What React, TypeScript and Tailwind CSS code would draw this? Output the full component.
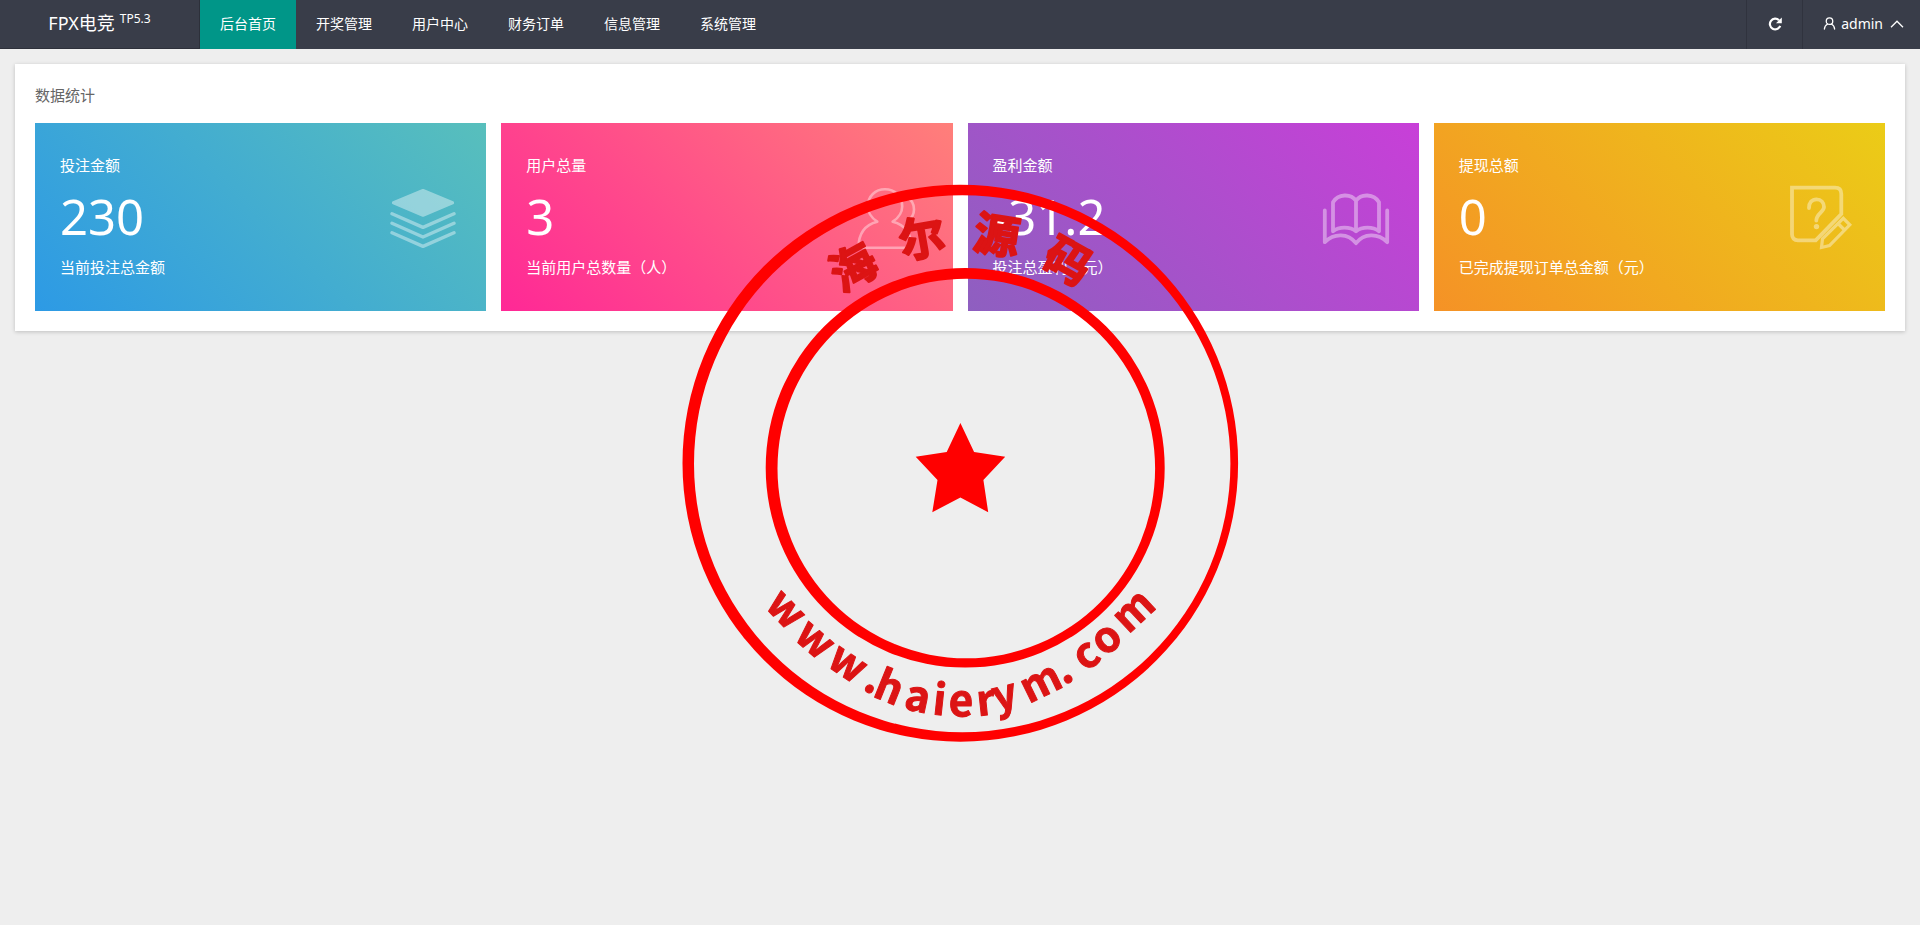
import type { ReactNode } from "react";

const navItems = ["后台首页", "开奖管理", "用户中心", "财务订单", "信息管理", "系统管理"];

function LayersIcon() {
  return (
    <g stroke="#fff" strokeLinecap="round" strokeLinejoin="round">
      <path d="M33 6.5 62.5 18.8 33 31.2 3.5 18.8Z" fill="#fff" strokeWidth="3.2" />
      <g fill="none" strokeWidth="3.4">
        <path d="M2 29.7 33 43.4 64 29.7" />
        <path d="M2 39.3 33 53 64 39.3" />
        <path d="M2 48.8 33 62.4 64 48.8" />
      </g>
    </g>
  );
}

function UsersIcon() {
  return (
    <g fill="none" stroke="#fff" strokeWidth="2.6" strokeLinejoin="round">
      <path d="M1.5 63.7C1.5 48 9 40.5 20.3 37.7C13.5 33.5 10.8 27 10.8 22.5C10.8 12 18.5 5.3 28 5.3S45.2 12 45.2 22.5C45.2 27 42.5 33.5 35.7 37.7C47 40.5 54.5 48 54.5 63.7Z" />
      <path d="M49.5 13C54.5 15.5 57 20 57 25.5C57 30.5 54.5 34.5 50.5 37.7" />
    </g>
  );
}

function BookIcon() {
  return (
    <g fill="none" stroke="#fff" strokeWidth="3.8" strokeLinecap="round" strokeLinejoin="round">
      <path d="M33 16.7C28 9.5 15 9.5 10 18.3V47.3C16 42.5 27 42.5 33 47.3C39 42.5 50 42.5 56 47.3V18.3C51 9.5 38 9.5 33 16.7V47.3" />
      <path d="M1.8 26.5V58.2C11 49 25 49 33 59.2C41 49 55 49 64.2 58.2V26.5" />
    </g>
  );
}

function QuestionIcon() {
  return (
    <g fill="none" stroke="#fff" strokeWidth="3.8">
      <path d="M3 3.7H46C50 3.7 52.3 6 52.3 10V30L26.7 56.3H9C5 56.3 3 54 3 50.3Z" />
      <path d="M20 24C20 18.5 23 15.3 27.5 15.3S35 18.5 35 23C35 28 27.3 29.500 27.3 36.5" strokeLinecap="round" />
      <circle cx="27.5" cy="42.6" r="2.7" fill="#fff" stroke="none" />
      <path d="M32.500 63.500 33.500 54.800 54.300 34.300 60.800 40.800 40.500 61.500ZM49 39.500 55.500 46" strokeWidth="3.2" />
    </g>
  );
}

type Stat = { title: string; value: string; note: string; tone: string; icon: ReactNode };

const stats: Stat[] = [
  {
    title: "投注金额",
    value: "230",
    note: "当前投注总金额",
    tone: "bg-[linear-gradient(45deg,#2d9ae5,#58bfbc)]",
    icon: <LayersIcon />,
  },
  {
    title: "用户总量",
    value: "3",
    note: "当前用户总数量（人）",
    tone: "bg-[linear-gradient(45deg,#ff2896,#ff7f7a)]",
    icon: <UsersIcon />,
  },
  {
    title: "盈利金额",
    value: "-31.2",
    note: "投注总盈利（元）",
    tone: "bg-[linear-gradient(45deg,#8e5fc0,#c83fd8)]",
    icon: <BookIcon />,
  },
  {
    title: "提现总额",
    value: "0",
    note: "已完成提现订单总金额（元）",
    tone: "bg-[linear-gradient(45deg,#f59226,#ebcc17)]",
    icon: <QuestionIcon />,
  },
];

function StatCard({ stat }: { stat: Stat }) {
  return (
    <article className={`flex items-center justify-between py-6 pr-[30px] pl-[25px] text-white ${stat.tone}`}>
      <div className="pb-[2px] text-[15px] whitespace-nowrap">
        <h3 className="leading-9">{stat.title}</h3>
        <p className="text-[49px] leading-[66px]">{stat.value}</p>
        <p className="leading-9">{stat.note}</p>
      </div>
      <svg viewBox="0 0 66 66" className="size-[66px] shrink-0 overflow-visible" aria-hidden="true">
        <g opacity="0.4">{stat.icon}</g>
      </svg>
    </article>
  );
}

// Each glyph sits on the seal's arc: position and rotation in degrees.
const sealName = [
  { c: "海", x: 853, y: 267, r: -29 },
  { c: "尔", x: 922, y: 238, r: -10 },
  { c: "源", x: 997, y: 235, r: 9 },
  { c: "码", x: 1068, y: 261, r: 29 },
];

const sealSite = [
  { c: "w", x: 776, y: 619, r: 46 },
  { c: "w", x: 806, y: 650, r: 41 },
  { c: "w", x: 840, y: 675, r: 34 },
  { c: ".", x: 868, y: 692, r: 26 },
  { c: "h", x: 884, y: 701, r: 22 },
  { c: "a", x: 915, y: 711, r: 12 },
  { c: "i", x: 938, y: 715, r: 6 },
  { c: "e", x: 961, y: 716, r: 0 },
  { c: "r", x: 987, y: 715, r: -6 },
  { c: "y", x: 1008, y: 709, r: -14 },
  { c: "m", x: 1047, y: 695, r: -26 },
  { c: ".", x: 1070, y: 682, r: -30 },
  { c: "c", x: 1094, y: 666, r: -35 },
  { c: "o", x: 1115, y: 649, r: -40 },
  { c: "m", x: 1143, y: 621, r: -43 },
];

function Seal() {
  return (
    <div className="pointer-events-none fixed inset-0 flex items-center justify-center">
      <svg viewBox="682 184 556 557" className="h-[557px] w-[556px] shrink-0 overflow-visible" role="img" aria-label="海尔源码 www.haierym.com">
        <g fill="#f00" fillRule="evenodd">
          <path d="M682.5 463.2A277.8 278.3 0 1 1 1238.1 463.2A277.8 278.3 0 1 1 682.5 463.2ZM694 463.7A268.2 268.5 0 1 0 1230.4 463.7A268.2 268.5 0 1 0 694 463.7Z" />
          <path d="M765.7 467.8A199.5 199.8 0 1 1 1164.7 467.8A199.5 199.8 0 1 1 765.7 467.8ZM777.5 468.5A188.8 189.8 0 1 0 1155.1 468.5A188.8 189.8 0 1 0 777.5 468.5Z" />
          <path d="M960.4 423 974.1 451.9 1005.2 456.7 983.4 480 988.2 512.2 960.4 497.4 932.3 512.2 937.5 480 915.7 456.7 946.7 451.9Z" />
        </g>
        <g
          fill="#dc1414"
          stroke="#dc1414"
          strokeLinejoin="round"
          textAnchor="middle"
          className="font-['Noto_Sans_CJK_SC',sans-serif] font-bold"
        >
          {sealName.map((g) => (
            <text key={g.c} fontSize="46" strokeWidth="2" transform={`translate(${g.x} ${g.y}) rotate(${g.r})`} y="17">
              {g.c}
            </text>
          ))}
          {sealSite.map((g, i) => (
            <text key={i} fontSize="42" strokeWidth="1" transform={`translate(${g.x} ${g.y}) rotate(${g.r})`}>
              {g.c}
            </text>
          ))}
        </g>
      </svg>
    </div>
  );
}

export default function App() {
  return (
    <div className="min-h-screen bg-[#eee] font-['Noto_Sans','Noto_Sans_CJK_SC',sans-serif]">
      <header className="flex h-[49px] bg-[#393d49] text-sm text-white">
        <a href="#home" className="flex w-[200px] shrink-0 items-center justify-center gap-[5px] border-r border-b border-black/20 pb-[2px] text-lg leading-6">
          <span>FPX电竞</span>
          <sup className="top-0 self-start pt-[10px] text-xs leading-[18px]">TP5.3</sup>
        </a>
        <nav className="flex flex-1">
          {navItems.map((item, i) => (
            <a
              key={item}
              href={`#${item}`}
              aria-current={i === 0 ? "page" : undefined}
              className={`flex items-center px-5 pb-[2px] ${i === 0 ? "bg-[#009688]" : ""}`}
            >
              {item}
            </a>
          ))}
        </nav>
        <button type="button" aria-label="刷新" className="flex w-14 items-center justify-center border-l border-black/15 pb-[2px]">
          <svg viewBox="0 0 14 14" className="size-[14px]" aria-hidden="true">
            <path d="M11 3.3A5.3 5.3 0 1 0 12.2 8.8" fill="none" stroke="#fff" strokeWidth="2.2" />
            <path d="M13.8.5V6.3H8Z" fill="#fff" />
          </svg>
        </button>
        <button type="button" className="flex items-center border-l border-black/15 pr-4 pb-[2px] pl-5">
          <svg viewBox="0 0 14 14" className="mr-[5px] size-[13px]" fill="none" stroke="#fff" strokeWidth="1.4" strokeLinecap="round" aria-hidden="true">
            <circle cx="7" cy="4.5" r="3.5" />
            <path d="M5 7.5C3 8.5 1.7 10.2 1.5 13M9 7.5C11 8.5 12.3 10.2 12.5 13" />
          </svg>
          admin
          <svg viewBox="0 0 14 14" className="ml-[7px] size-[14px]" fill="none" stroke="#fff" strokeWidth="1.3" aria-hidden="true">
            <path d="M1 10.2 7 4.2 13 10.2" />
          </svg>
        </button>
      </header>

      <main className="p-[15px]">
        <section className="bg-white px-5 pt-[19px] pb-5 shadow-[0_1px_4px_rgba(0,0,0,0.2)]">
          <h2 className="mb-4 text-[15px] leading-6 text-[#666]">数据统计</h2>
          <div className="grid grid-cols-4 gap-[15px]">
            {stats.map((stat) => (
              <StatCard key={stat.title} stat={stat} />
            ))}
          </div>
        </section>
      </main>

      <Seal />
    </div>
  );
}
